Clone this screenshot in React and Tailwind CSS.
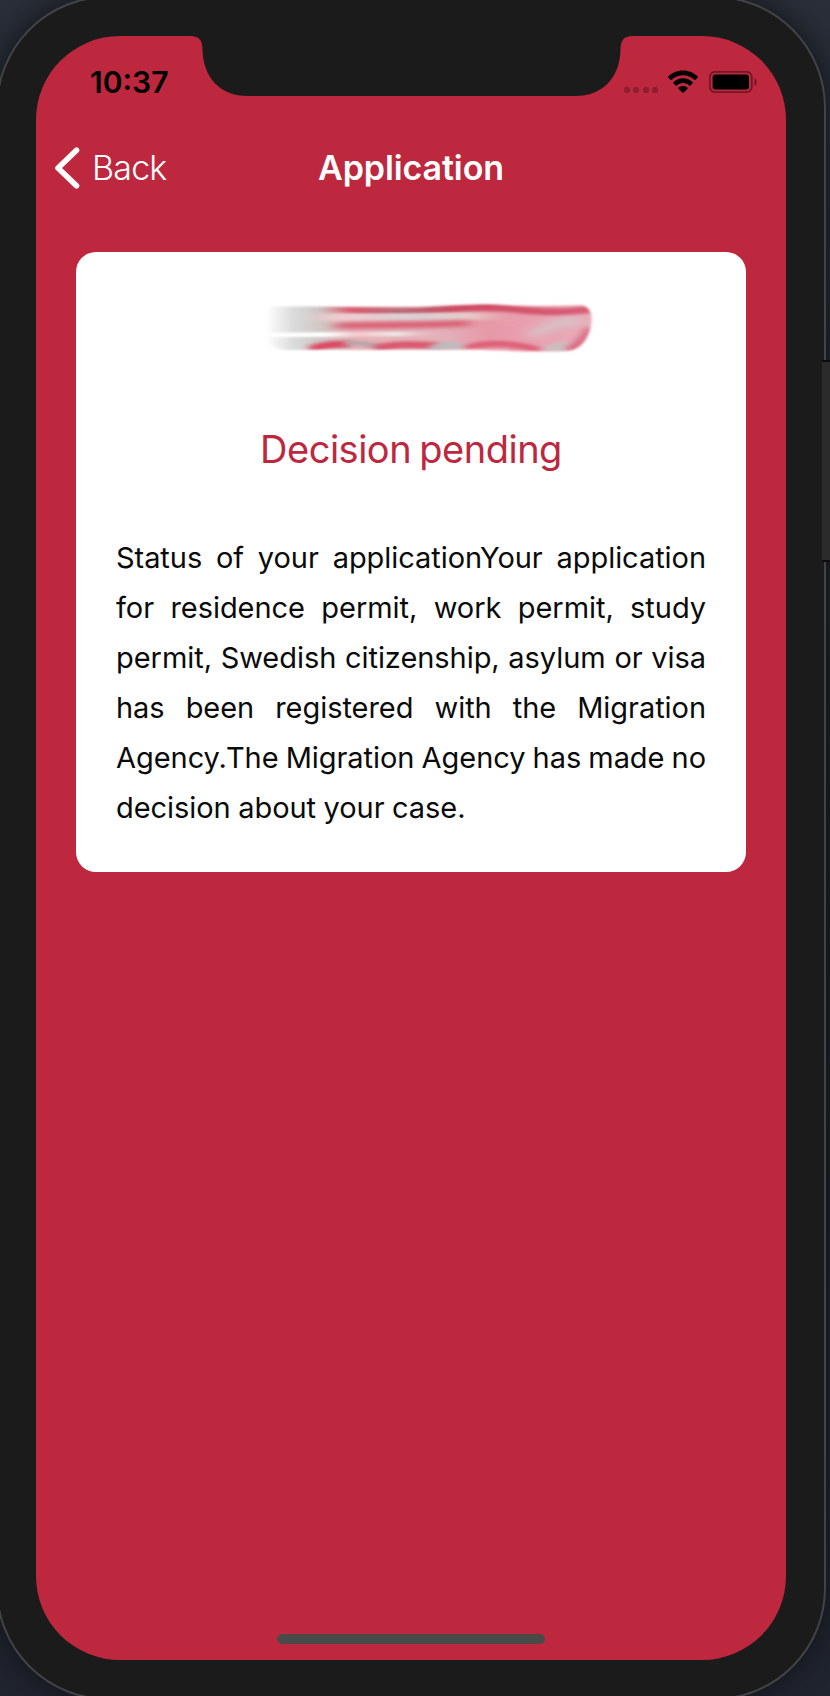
const statusLines = [
  "Status of your applicationYour application",
  "for residence permit, work permit, study",
  "permit, Swedish citizenship, asylum or visa",
  "has been registered with the Migration",
  "Agency.The Migration Agency has made no",
];

function Notch() {
  return (
    <svg className="absolute left-[154px] top-[-1px]" width="443" height="61" viewBox="0 -1 443 61" aria-hidden="true">
      <path
        d="M0 -1 V0 C10 0 12.5 5 12.5 14 C13.5 42 30 60 58 60 H385 C413 60 429.5 42 430.5 14 C430.5 5 433 0 443 0 V-1 Z"
        fill="#1b1b1b"
      />
    </svg>
  );
}

function StatusBar() {
  return (
    <div className="flex h-[88px] items-start justify-between pl-[54px] pr-[28px]">
      <span className="mt-[27px] text-[30px] font-semibold leading-[38px] text-black">10:37</span>
      <div className="mt-[34px] flex items-start">
        <div className="mt-[16.5px] flex gap-[3.4px]">
          <i className="size-[6px] rounded-[2px] bg-black/25" />
          <i className="size-[6px] rounded-[2px] bg-black/25" />
          <i className="size-[6px] rounded-[2px] bg-black/25" />
          <i className="size-[6px] rounded-[2px] bg-black/25" />
        </div>
        <svg className="ml-[10px]" width="30" height="23" viewBox="0 0 30 23" aria-hidden="true">
          <path d="M15 .5 C20.8 .5 26 2.8 29.5 6.3 C30 6.8 30 7.2 29.5 7.7 L27.5 9.7 C27.1 10.1 26.7 10.1 26.2 9.7 C23.2 6.9 19.4 5.3 15 5.3 C10.6 5.3 6.8 6.9 3.8 9.7 C3.3 10.1 2.9 10.1 2.5 9.7 L.5 7.7 C0 7.2 0 6.8 .5 6.3 C4 2.8 9.2 .5 15 .5Z" />
          <path d="M15 8.3 C18.7 8.3 22 9.7 24.5 12 C25 12.5 25 12.9 24.5 13.4 L22.4 15.4 C22 15.8 21.6 15.8 21.1 15.4 C19.5 14 17.4 13.1 15 13.1 C12.6 13.1 10.5 14 8.9 15.4 C8.4 15.8 8 15.8 7.6 15.4 L5.5 13.4 C5 12.9 5 12.5 5.5 12 C8 9.7 11.3 8.3 15 8.3Z" />
          <path d="M15 16 C16.8 16 18.3 16.6 19.4 17.6 C19.9 18 19.9 18.4 19.4 18.9 L15.7 22.4 C15.2 22.9 14.8 22.9 14.3 22.4 L10.6 18.9 C10.1 18.4 10.1 18 10.6 17.6 C11.7 16.6 13.2 16 15 16Z" />
        </svg>
        <svg className="ml-[11px] mt-[1px]" width="49" height="22" viewBox="0 0 49 22" aria-hidden="true">
          <rect x="0.8" y="0.8" width="42" height="20.4" rx="5.5" fill="none" stroke="#000" strokeOpacity=".4" strokeWidth="1.8" />
          <rect x="3.6" y="3.6" width="36.4" height="14.8" rx="3" />
          <path d="M45.5 7 C48.2 8.2 48.2 13.8 45.5 15Z" fillOpacity=".45" />
        </svg>
      </div>
    </div>
  );
}

function NavBar() {
  return (
    <header className="grid h-[88px] grid-cols-3 items-center px-[18px] text-white">
      <button type="button" className="flex items-center text-left">
        <svg width="26" height="42" viewBox="0 0 26 42" fill="none" aria-hidden="true">
          <path d="M22.5 3.2 L4 21 L22.5 38.8" stroke="#fff" strokeWidth="5.6" strokeLinecap="round" strokeLinejoin="round" />
        </svg>
        <span className="ml-[12px] text-[34px] font-[350] leading-[42px] tracking-[-0.8px]">Back</span>
      </button>
      <h1 className="whitespace-nowrap text-center text-[34px] font-semibold leading-[42px] tracking-[-0.1px]">Application</h1>
    </header>
  );
}

function RedactedName() {
  return (
    <svg className="ml-[180px] block" width="350" height="60" viewBox="256 292 350 60" overflow="visible" aria-hidden="true">
      <defs>
        <linearGradient id="fade" x1="0" x2="1">
          <stop offset="0" stopColor="#fff" />
          <stop offset=".08" stopColor="#dcdcdc" />
          <stop offset=".15" stopColor="#cfcbc9" />
          <stop offset=".3" stopColor="#e6b2b7" />
          <stop offset=".55" stopColor="#e2b0b8" />
          <stop offset=".68" stopColor="#e898a7" />
          <stop offset="1" stopColor="#e8adb9" />
        </linearGradient>
        <linearGradient id="top" x1="0" x2="1">
          <stop offset="0" stopColor="#d4606f" stopOpacity="0" />
          <stop offset=".12" stopColor="#d85b70" />
          <stop offset=".3" stopColor="#b86b75" />
          <stop offset=".5" stopColor="#cc4b62" />
          <stop offset="1" stopColor="#d95f78" />
        </linearGradient>
        <linearGradient id="pale" x1="0" x2="1">
          <stop offset="0" stopColor="#f3d0ce" stopOpacity="0" />
          <stop offset=".2" stopColor="#f0cdd0" />
          <stop offset=".5" stopColor="#d9d0d6" />
          <stop offset=".8" stopColor="#e6cbc7" />
          <stop offset="1" stopColor="#e3a9ae" stopOpacity="0" />
        </linearGradient>
        <linearGradient id="white" x1="0" x2="1">
          <stop offset="0" stopColor="#fff" />
          <stop offset=".35" stopColor="#fff" />
          <stop offset=".5" stopColor="#f6c8cc" />
          <stop offset=".72" stopColor="#eceaea" />
          <stop offset="1" stopColor="#eba5ae" stopOpacity="0" />
        </linearGradient>
        <filter id="soft" filterUnits="userSpaceOnUse" x="240" y="280" width="380" height="90">
          <feGaussianBlur stdDeviation="4 1.8" />
        </filter>
        <filter id="fine" filterUnits="userSpaceOnUse" x="240" y="280" width="380" height="90">
          <feGaussianBlur stdDeviation="4 1" />
        </filter>
        <filter id="smear" filterUnits="userSpaceOnUse" x="240" y="280" width="380" height="90">
          <feGaussianBlur stdDeviation="8 2" />
        </filter>
        <filter id="edge" filterUnits="userSpaceOnUse" x="240" y="280" width="380" height="90">
          <feGaussianBlur stdDeviation="1.8 1" />
        </filter>
        <mask id="stroke" maskUnits="userSpaceOnUse" x="256" y="292" width="350" height="70">
          <path d="M266 306.5 L420 306.5 C450 305 470 304 490 304 C525 306 550 306 583 305 C591 308 593 317 591 326 C588 341 580 350 568 351 C530 353 490 349 450 350 H285 C273 349 268 344 266 339Z" fill="#fff" filter="url(#edge)" />
        </mask>
      </defs>
      <g mask="url(#stroke)">
        <rect x="266" y="298" width="328" height="58" fill="url(#fade)" />
        <path d="M318 309 C350 309 370 312 410 311 S470 306 500 308 S550 315 594 309" stroke="url(#top)" strokeWidth="7" fill="none" filter="url(#soft)" />
        <path d="M300 317 C350 319 430 315 515 317" stroke="url(#pale)" strokeWidth="7" fill="none" filter="url(#fine)" />
        <path d="M335 326 C380 324 430 326 470 323" stroke="#d85a70" strokeWidth="6" fill="none" filter="url(#smear)" />
        <path d="M262 335 C320 334 380 335 450 333" stroke="url(#white)" strokeWidth="4.5" fill="none" filter="url(#fine)" />
        <path d="M310 349 C325 345 330 344 350 344" stroke="#dc4963" strokeWidth="7" fill="none" filter="url(#soft)" />
        <path d="M345 343 C362 342 372 345 385 348" stroke="#b9a4aa" strokeWidth="5" fill="none" filter="url(#soft)" />
        <path d="M375 348 C395 344 410 344 440 346" stroke="#da5870" strokeWidth="7" fill="none" filter="url(#soft)" />
        <path d="M430 350 C442 344 449 344 462 347" stroke="#bcbcbe" strokeWidth="7" fill="none" filter="url(#soft)" />
        <path d="M466 348 C485 342 510 342 540 350" stroke="#dc6078" strokeWidth="6" fill="none" filter="url(#soft)" />
        <path d="M530 336 C550 325 562 321 580 321" stroke="#d9bec5" strokeWidth="10" fill="none" filter="url(#smear)" />
        <path d="M545 350 L569 345" stroke="#ccbcbf" strokeWidth="9" fill="none" filter="url(#soft)" />
        <path d="M569 351 C577 346 585 339 590 328" stroke="#d96880" strokeWidth="8" fill="none" filter="url(#soft)" />
      </g>
    </svg>
  );
}

export default function App() {
  return (
    <div className="relative h-[1696px] w-[830px] overflow-hidden bg-linear-to-b from-[#292e38] via-[#171b22] to-[#20242f] font-['Inter','Liberation_Sans',sans-serif]">
      <div className="-ml-[4px] -mt-[4px] h-[1704px] w-[830px] rounded-[112px] border-2 border-[#424347] bg-[#1b1b1b] pl-[38px] pt-[38px] shadow-[0_0_28px_#111317]">
        <main className="relative h-[1624px] w-[750px] overflow-hidden rounded-[84px] bg-[#bd283f]">
          <Notch />
          <StatusBar />
          <NavBar />
          <section className="mx-[40px] mt-[40px] h-[620px] rounded-[20px] bg-white pt-[40px]">
            <RedactedName />
            <h2 className="mt-[72px] text-center text-[38px] leading-[50px] tracking-[-0.5px] text-[#bd283f] [word-spacing:-2px]">Decision pending</h2>
            <div className="ml-[40px] mt-[59px] w-[590px] text-[29px] leading-[50px] text-[#0b0b0b]">
              {statusLines.map((line) => (
                <p key={line} className="whitespace-nowrap tracking-[-0.05px] [word-spacing:-3px] [text-align-last:justify]">{line}</p>
              ))}
              <p className="whitespace-nowrap tracking-[-0.05px] [word-spacing:-0.6px]">decision about your case.</p>
            </div>
          </section>
          <div className="absolute bottom-[16px] left-[241px] h-[10px] w-[268px] rounded-full bg-[#4a4a4a]" />
        </main>
      </div>
      <div className="absolute left-[822px] top-[360px] h-[202px] w-[8px] border-y-2 border-[#0d0d0d] bg-[#2b2b2b]" />
    </div>
  );
}
